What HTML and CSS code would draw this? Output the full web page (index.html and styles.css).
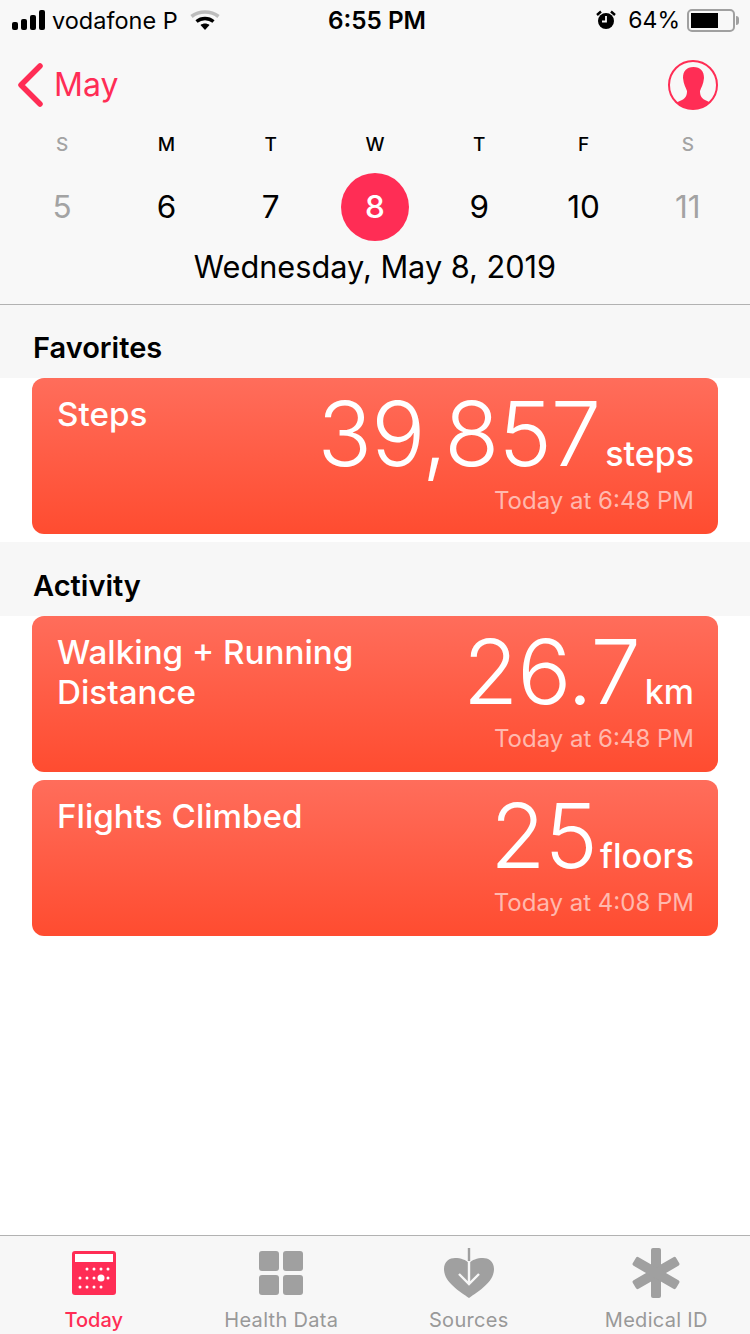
FILE: index.html
```html
<!DOCTYPE html>
<html>
<head>
    <title>Health Today</title>
    <link rel="stylesheet" href="styles.css">
</head>
<body>
    <div class="app">
        <header class="top">
            <div class="status">
                <div class="status-left">
                    <div class="signal"><i></i><i></i><i></i><i></i></div>
                    <span class="carrier">vodafone P</span>
                    <svg class="wifi" width="30" height="21" viewBox="0 0 30 21">
                        <path d="M1.500 6.500C9 0.500 21 0.500 28.500 6.500" fill="none" stroke="#bdbdbd" stroke-width="3.600"/>
                        <path d="M6.500 11.500C11.500 7.500 18.500 7.500 23.500 11.500" fill="none" stroke="#000" stroke-width="3.400"/>
                        <path d="M10.500 15C13 13 17 13 19.500 15L15 20Z" fill="#000"/>
                    </svg>
                </div>
                <div class="clock">6:55 PM</div>
                <div class="status-right">
                    <svg class="alarm" width="20" height="20" viewBox="0 0 20 20">
                        <circle cx="10" cy="11" r="8" fill="#000"/>
                        <path d="M10 6V11.500H6" fill="none" stroke="#f8f8f8" stroke-width="1.800"/>
                        <path d="M1 5L5 1.500M19 5L15 1.500" stroke="#000" stroke-width="2.400"/>
                    </svg>
                    <span class="percent">64%</span>
                    <div class="battery"><div class="battery-fill"></div></div>
                    <div class="battery-tip"></div>
                </div>
            </div>

            <div class="nav">
                <div class="back">
                    <svg width="26" height="44" viewBox="0 0 26 44">
                        <path d="M23 3L4 22L23 41" fill="none" stroke="#ff2d55" stroke-width="5.500" stroke-linecap="round" stroke-linejoin="round"/>
                    </svg>
                    <span>May</span>
                </div>
                <svg class="profile" width="52" height="52" viewBox="0 0 52 52">
                    <defs>
                        <clipPath id="ring"><circle cx="26" cy="26" r="24"/></clipPath>
                    </defs>
                    <circle cx="26" cy="26" r="24" fill="none" stroke="#ff2d55" stroke-width="2"/>
                    <path clip-path="url(#ring)" d="M26.500 8C33.500 8 37 12 37 19C36.500 25 34 29 33 32C33 36 34 39 38 41C42 43 44 44 46 46V52H6V46C8 44 11 43 15 41C19 39 20 36 20 32C19 29 16.500 25 16 19C16 12 19.500 8 26.500 8Z" fill="#ff2d55"/>
                </svg>
            </div>

            <div class="week">
                <div class="day off"><span class="letter">S</span><span class="num">5</span></div>
                <div class="day"><span class="letter">M</span><span class="num">6</span></div>
                <div class="day"><span class="letter">T</span><span class="num">7</span></div>
                <div class="day current"><span class="letter">W</span><span class="num">8</span></div>
                <div class="day"><span class="letter">T</span><span class="num">9</span></div>
                <div class="day"><span class="letter">F</span><span class="num">10</span></div>
                <div class="day off"><span class="letter">S</span><span class="num">11</span></div>
            </div>
            <div class="date">Wednesday, May 8, 2019</div>
        </header>

        <main class="content">
            <h2 class="section-title">Favorites</h2>
            <div class="cards">
                <div class="card">
                    <div class="card-name">Steps</div>
                    <div class="card-data">
                        <div class="reading"><span class="value">39,857</span><span class="unit">steps</span></div>
                        <div class="when">Today at 6:48 PM</div>
                    </div>
                </div>
            </div>

            <h2 class="section-title next">Activity</h2>
            <div class="cards">
                <div class="card">
                    <div class="card-name">Walking + Running Distance</div>
                    <div class="card-data">
                        <div class="reading"><span class="value">26.7</span><span class="unit">km</span></div>
                        <div class="when">Today at 6:48 PM</div>
                    </div>
                </div>
                <div class="card">
                    <div class="card-name">Flights Climbed</div>
                    <div class="card-data">
                        <div class="reading"><span class="value">25</span><span class="unit tight">floors</span></div>
                        <div class="when">Today at 4:08 PM</div>
                    </div>
                </div>
            </div>
        </main>

        <nav class="tabs">
            <div class="tab active">
                <svg width="44" height="50" viewBox="0 -3 44 50">
                    <rect width="44" height="44" rx="3" fill="#ff2d55"/>
                    <rect x="3" y="3" width="38" height="8" fill="#fff"/>
                    <g fill="#fff">
                        <circle cx="15" cy="18" r="1.500"/><circle cx="22" cy="18" r="1.500"/><circle cx="29" cy="18" r="1.500"/><circle cx="36" cy="18" r="1.500"/>
                        <circle cx="8" cy="27" r="1.500"/><circle cx="15" cy="27" r="1.500"/><circle cx="22" cy="27" r="1.500"/><circle cx="29" cy="27" r="3.500"/><circle cx="36" cy="27" r="1.500"/>
                        <circle cx="8" cy="36" r="1.500"/><circle cx="15" cy="36" r="1.500"/><circle cx="22" cy="36" r="1.500"/><circle cx="29" cy="36" r="1.500"/>
                    </g>
                </svg>
                <span>Today</span>
            </div>
            <div class="tab">
                <svg width="44" height="50" viewBox="0 -3 44 50">
                    <g fill="#a0a0a0">
                        <rect width="20" height="20" rx="3"/><rect x="24" width="20" height="20" rx="3"/>
                        <rect y="24" width="20" height="20" rx="3"/><rect x="24" y="24" width="20" height="20" rx="3"/>
                    </g>
                </svg>
                <span>Health Data</span>
            </div>
            <div class="tab">
                <svg width="52" height="50" viewBox="0 0 52 50">
                    <path d="M26 50C16 43 1 34 1 21C1 13 7 10 12 10C18 10 23 12 26 15C29 12 34 10 40 10C45 10 51 13 51 21C51 34 36 43 26 50Z" fill="#a0a0a0"/>
                    <path d="M26 12V35M16 26L26 36L36 26" fill="none" stroke="#f7f7f7" stroke-width="2.400"/>
                    <path d="M26 0V13" fill="none" stroke="#a0a0a0" stroke-width="2.400"/>
                </svg>
                <span>Sources</span>
            </div>
            <div class="tab">
                <svg width="48" height="50" viewBox="0 0 48 50">
                    <g fill="#a0a0a0">
                        <rect x="19" y="0" width="10" height="50" rx="2"/>
                        <rect x="19" y="0" width="10" height="50" rx="2" transform="rotate(60 24 25)"/>
                        <rect x="19" y="0" width="10" height="50" rx="2" transform="rotate(-60 24 25)"/>
                    </g>
                </svg>
                <span>Medical ID</span>
            </div>
        </nav>
    </div>
</body>
</html>
```

FILE: styles.css
```css
* {
    box-sizing: border-box;
}

html, body {
    margin: 0;
    padding: 0;
}

body {
    font-family: Inter, "Liberation Sans", sans-serif;
    background-color: #fff;
    color: #000;
}

.app {
    width: 750px;
    height: 1334px;
    display: flex;
    flex-direction: column;
    overflow: hidden;
}

.top {
    height: 305px;
    background-color: #f8f8f8;
    border-bottom: 1px solid #b2b2b2;
}

.status {
    height: 40px;
    padding: 0 12px;
    display: grid;
    grid-template-columns: 1fr auto 1fr;
    align-items: center;
    font-size: 24px;
}

.status-left {
    display: flex;
    align-items: center;
}

.signal {
    display: flex;
    align-items: flex-end;
    gap: 3px;
    width: 33px;
    height: 20px;
}

.signal i {
    width: 6px;
    border-radius: 2px;
    background-color: #000;
}

.signal i:nth-child(1) { height: 8px; }
.signal i:nth-child(2) { height: 11px; }
.signal i:nth-child(3) { height: 15px; }
.signal i:nth-child(4) { height: 20px; }

.carrier {
    margin-left: 7px;
    font-size: 23.500px;
}

.wifi {
    margin-left: 12px;
}

.clock {
    font-weight: 600;
    font-size: 24.300px;
    margin-left: 4px;
}

.status-right {
    display: flex;
    align-items: center;
    justify-content: flex-end;
}

.percent {
    margin-left: 12px;
    margin-right: 7px;
    font-size: 23px;
}

.battery {
    width: 48px;
    height: 23px;
    border: 2px solid #a0a0a0;
    border-radius: 5px;
    padding: 2px;
}

.battery-fill {
    width: 27px;
    height: 15px;
    background-color: #000;
}

.battery-tip {
    width: 3px;
    height: 9px;
    margin-left: 1px;
    margin-right: -1px;
    background-color: #a0a0a0;
    border-radius: 0 3px 3px 0;
}

.nav {
    height: 85px;
    padding: 4px 31px 0 17px;
    display: flex;
    justify-content: space-between;
    align-items: center;
}

.back {
    display: flex;
    align-items: center;
    color: #ff2d55;
    font-size: 32px;
}

.back span {
    margin-left: 11px;
}

.week {
    display: grid;
    grid-template-columns: repeat(7, 1fr);
    padding: 0 10px;
}

.day {
    display: flex;
    flex-direction: column;
    align-items: center;
}

.letter {
    height: 40px;
    line-height: 40px;
    font-size: 19px;
    font-weight: 500;
}

.num {
    width: 68px;
    height: 68px;
    margin-top: 8px;
    line-height: 68px;
    text-align: center;
    font-size: 31.500px;
    border-radius: 50%;
}

.off .letter, .off .num {
    color: #a3a3a3;
}

.current .num {
    background-color: #ff2d55;
    color: #fff;
    font-weight: 500;
}

.date {
    text-align: center;
    font-size: 30.700px;
    line-height: 40px;
    margin-top: 6px;
}

.content {
    flex: 1;
}

.section-title {
    margin: 0;
    height: 73px;
    padding: 22px 33px 0;
    font-size: 29px;
    line-height: 42px;
    font-weight: 600;
    background-color: #f7f7f7;
}

.section-title.next {
    height: 74px;
    padding-top: 23px;
}

.cards {
    display: flex;
    flex-direction: column;
    gap: 8px;
    padding: 0 32px 8px;
}

.card {
    height: 156px;
    padding: 16px 24px 0 25px;
    border-radius: 12px;
    background: linear-gradient(#ff6d5b, #ff4c30);
    color: #fff;
    display: flex;
    justify-content: space-between;
}

.card-name {
    width: 320px;
    font-size: 33.200px;
    line-height: 40px;
    font-weight: 500;
}

.card-data {
    text-align: right;
}

.reading {
    height: 88px;
    display: flex;
    justify-content: flex-end;
    align-items: baseline;
    margin-top: -4px;
}

.value {
    font-size: 90px;
    line-height: 88px;
    font-weight: 300;
    letter-spacing: -1px;
}

.unit {
    margin-left: 5px;
    font-size: 34px;
    font-weight: 500;
}

.unit.tight {
    margin-left: 3px;
}

.when {
    margin-top: 8px;
    font-size: 24px;
    line-height: 30px;
    color: rgba(255, 255, 255, 0.6);
}

.tabs {
    height: 99px;
    background-color: #f7f7f7;
    border-top: 1px solid #b2b2b2;
    display: grid;
    grid-template-columns: repeat(4, 187.500px);
}

.tab {
    display: flex;
    flex-direction: column;
    align-items: center;
    color: #999;
    font-size: 20px;
}

.tab svg {
    margin-top: 12px;
}

.tab span {
    margin-top: 9px;
    line-height: 26px;
    letter-spacing: 0.300px;
}

.tab.active {
    color: #ff2d55;
    font-weight: 500;
}

.tab.active span {
    letter-spacing: 0;
}
```
